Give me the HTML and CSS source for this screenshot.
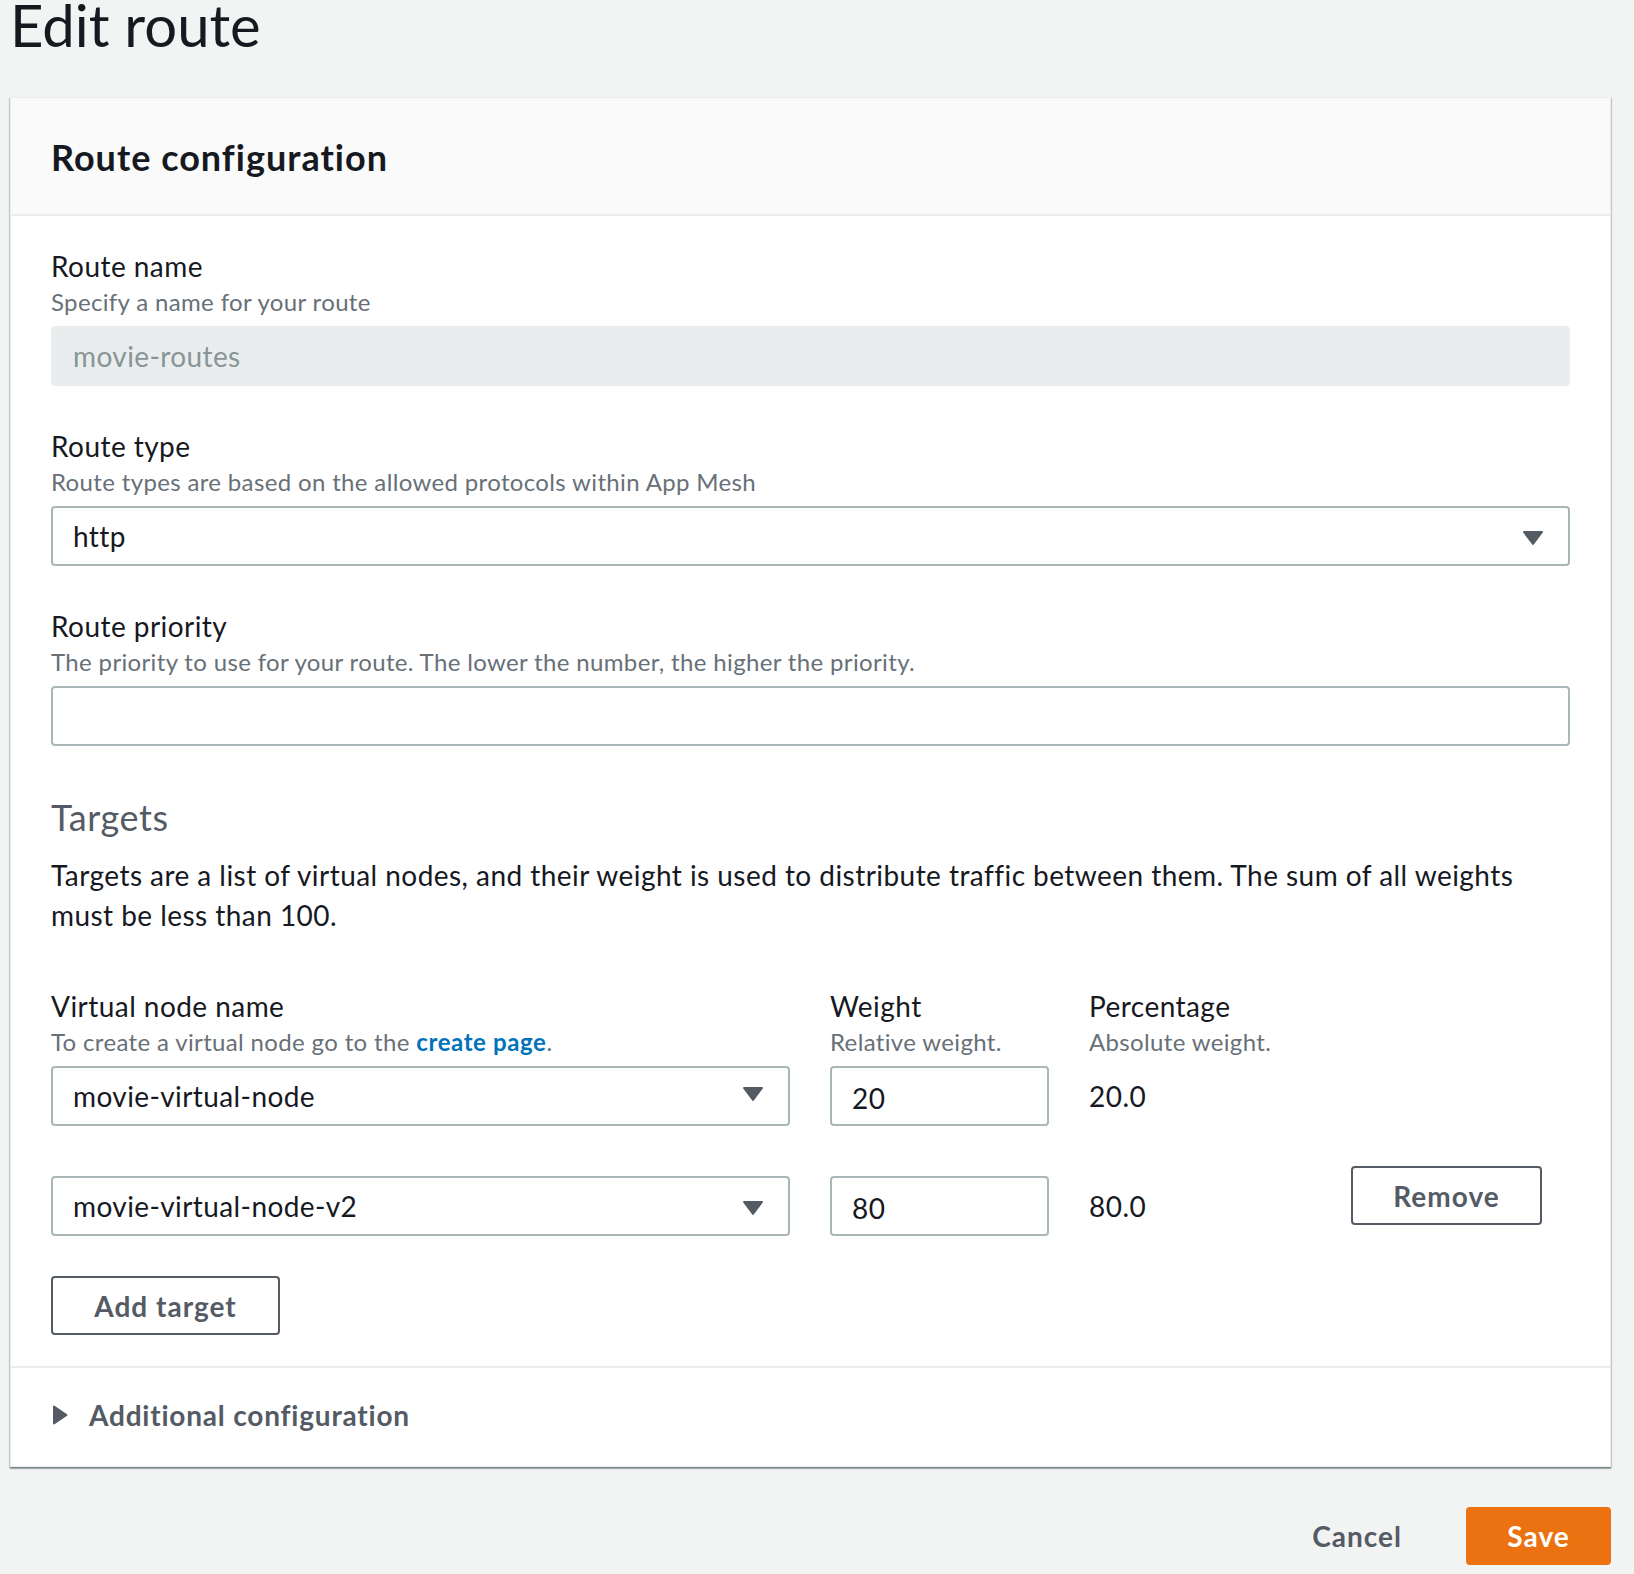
FILE: index.html
```html
<!DOCTYPE html>
<html lang="en">

<head>
    <meta charset="UTF-8">
    <meta name="viewport" content="width=device-width, initial-scale=1.0">
    <title>Edit route</title>
    <link rel="stylesheet" href="styles.css">
</head>

<body>
    <div class="page">
        <h1 class="page-title">Edit route</h1>

        <form class="card" id="routeForm">
            <div class="card-header">
                <h2>Route configuration</h2>
            </div>

            <div class="card-body">
                <div class="field">
                    <label for="routeName">Route name</label>
                    <p class="desc">Specify a name for your route</p>
                    <input type="text" id="routeName" class="input" value="movie-routes" disabled>
                </div>

                <div class="field">
                    <label for="routeType">Route type</label>
                    <p class="desc">Route types are based on the allowed protocols within App Mesh</p>
                    <div class="select">
                        <select id="routeType" class="input">
                            <option>http</option>
                            <option>tcp</option>
                        </select>
                        <svg class="caret" viewBox="0 0 22 16"><polygon points="2,2 20,2 11,14"/></svg>
                    </div>
                </div>

                <div class="field">
                    <label for="priority">Route priority</label>
                    <p class="desc">The priority to use for your route. The lower the number, the higher the priority.</p>
                    <input type="text" id="priority" class="input">
                </div>

                <h3 class="section-title">Targets</h3>
                <p class="section-text">Targets are a list of virtual nodes, and their weight is used to distribute traffic between them. The sum of all weights must be less than 100.</p>

                <div class="targets">
                    <div class="target-row target-head">
                        <div>
                            <label>Virtual node name</label>
                            <p class="desc">To create a virtual node go to the <a href="#">create page</a>.</p>
                        </div>
                        <div>
                            <label>Weight</label>
                            <p class="desc">Relative weight.</p>
                        </div>
                        <div>
                            <label>Percentage</label>
                            <p class="desc">Absolute weight.</p>
                        </div>
                    </div>

                    <div class="target-row">
                        <div class="select">
                            <select class="input">
                                <option>movie-virtual-node</option>
                            </select>
                            <svg class="caret" viewBox="0 0 22 16"><polygon points="2,2 20,2 11,14"/></svg>
                        </div>
                        <input type="text" class="input weight" value="20">
                        <span class="pct">20.0</span>
                    </div>

                    <div class="target-row">
                        <div class="select">
                            <select class="input">
                                <option>movie-virtual-node-v2</option>
                            </select>
                            <svg class="caret" viewBox="0 0 22 16"><polygon points="2,2 20,2 11,14"/></svg>
                        </div>
                        <input type="text" class="input weight" value="80">
                        <span class="pct">80.0</span>
                        <button type="button" class="btn remove">Remove</button>
                    </div>
                </div>

                <button type="button" class="btn add">Add target</button>
            </div>

            <div class="expander">
                <svg class="expander-icon" viewBox="0 0 16 20"><polygon points="2,1.5 14.5,10 2,18.5"/></svg>
                <span>Additional configuration</span>
            </div>
        </form>

        <div class="actions">
            <button type="button" class="link-btn">Cancel</button>
            <button type="button" class="btn primary">Save</button>
        </div>
    </div>
</body>

</html>
```

FILE: styles.css
```css
body {
    margin: 0;
    background-color: #f2f3f3;
    font-family: Lato, "Noto Sans", sans-serif;
    letter-spacing: 0.45px;
    color: #16191f;
}

.page {
    padding: 0 23px 20px 10px;
}

.page-title {
    margin: 0 0 47px;
    font-size: 58px;
    line-height: 50px;
    font-weight: 400;
    letter-spacing: 0;
}

.card {
    background-color: #fff;
    border: 1px solid #eaeded;
    box-shadow: 0 2px 1px 0 rgba(0, 28, 36, 0.3), 1px 1px 1px 0 rgba(0, 28, 36, 0.15), -1px 1px 1px 0 rgba(0, 28, 36, 0.15);
}

.card-header {
    background-color: #fafafa;
    padding: 37px 40px 35px;
    border-bottom: 2px solid #eaeded;
}

.card-header h2 {
    margin: 0;
    font-size: 36px;
    line-height: 44px;
    font-weight: 700;
    letter-spacing: 1px;
}

.card-body {
    padding: 30px 40px 31px;
}

.field {
    margin-bottom: 40px;
}

label {
    display: block;
    font-size: 28px;
    line-height: 40px;
}

.desc {
    margin: 0;
    font-size: 24px;
    line-height: 32px;
    letter-spacing: 0.35px;
    color: #687078;
}

.desc a {
    color: #0073bb;
    font-weight: 700;
    letter-spacing: 0.6px;
    text-decoration: none;
}

.input {
    display: block;
    box-sizing: border-box;
    width: 100%;
    height: 60px;
    margin-top: 8px;
    padding: 0 20px;
    font: inherit;
    font-size: 28px;
    letter-spacing: 0.4px;
    color: #16191f;
    background-color: #fff;
    border: 2px solid #aab7b8;
    border-radius: 4px;
    outline: none;
}

.input:disabled {
    background-color: #eaeded;
    border-color: #eaeded;
    color: #879596;
}

.select {
    position: relative;
}

select.input {
    appearance: none;
    -webkit-appearance: none;
}

.caret {
    position: absolute;
    right: 26px;
    top: 50%;
    width: 22px;
    height: 16px;
    margin-top: -6px;
    fill: #545b64;
    stroke: #545b64;
    stroke-width: 2;
    stroke-linejoin: round;
    pointer-events: none;
}

.section-title {
    margin: 49px 0 0;
    font-size: 36px;
    line-height: 44px;
    font-weight: 400;
    letter-spacing: 0.6px;
    color: #545b64;
}

.section-text {
    margin: 16px 0 0;
    font-size: 28px;
    line-height: 40px;
}

.targets {
    margin-top: 51px;
}

.target-row {
    display: grid;
    grid-template-columns: 739px 219px 222px 191px;
    column-gap: 40px;
    align-items: center;
    margin-top: 50px;
}

.target-head {
    margin-top: 0;
    align-items: start;
}

.target-head + .target-row {
    margin-top: 0;
}

.target-row .select .input,
.target-row .weight {
    margin-top: 0;
}

.target-head + .target-row .select .input,
.target-head + .target-row .weight {
    margin-top: 8px;
}

.target-head + .target-row .pct {
    margin-top: 8px;
}

.weight {
    padding-top: 3px;
}

.pct {
    font-size: 28px;
    line-height: 40px;
}

.btn {
    box-sizing: border-box;
    height: 59px;
    padding: 0 38px;
    font: inherit;
    font-size: 28px;
    font-weight: 700;
    letter-spacing: 1px;
    color: #545b64;
    background-color: #fff;
    border: 2px solid #545b64;
    border-radius: 4px;
    cursor: pointer;
}

.remove {
    align-self: start;
    width: 191px;
    margin-top: -10px;
    padding: 0;
}

.add {
    display: block;
    width: 229px;
    margin-top: 40px;
    padding: 0;
}

.expander {
    display: flex;
    align-items: center;
    gap: 21px;
    padding: 27px 40px 31px 41px;
    border-top: 2px solid #eaeded;
    font-size: 28px;
    line-height: 40px;
    font-weight: 700;
    letter-spacing: 0.8px;
    color: #545b64;
}

.expander-icon {
    width: 16px;
    height: 20px;
    fill: #545b64;
    stroke: #545b64;
    stroke-width: 2;
    stroke-linejoin: round;
}

.actions {
    display: flex;
    justify-content: flex-end;
    align-items: center;
    margin-top: 40px;
}

.link-btn {
    height: 58px;
    margin-right: 44px;
    padding: 0 20px;
    font: inherit;
    font-size: 28px;
    font-weight: 700;
    letter-spacing: 1px;
    color: #545b64;
    background: none;
    border: none;
    cursor: pointer;
}

.primary {
    width: 145px;
    height: 58px;
    padding: 0;
    color: #fff;
    background-color: #ec7211;
    border-color: #ec7211;
}
```
